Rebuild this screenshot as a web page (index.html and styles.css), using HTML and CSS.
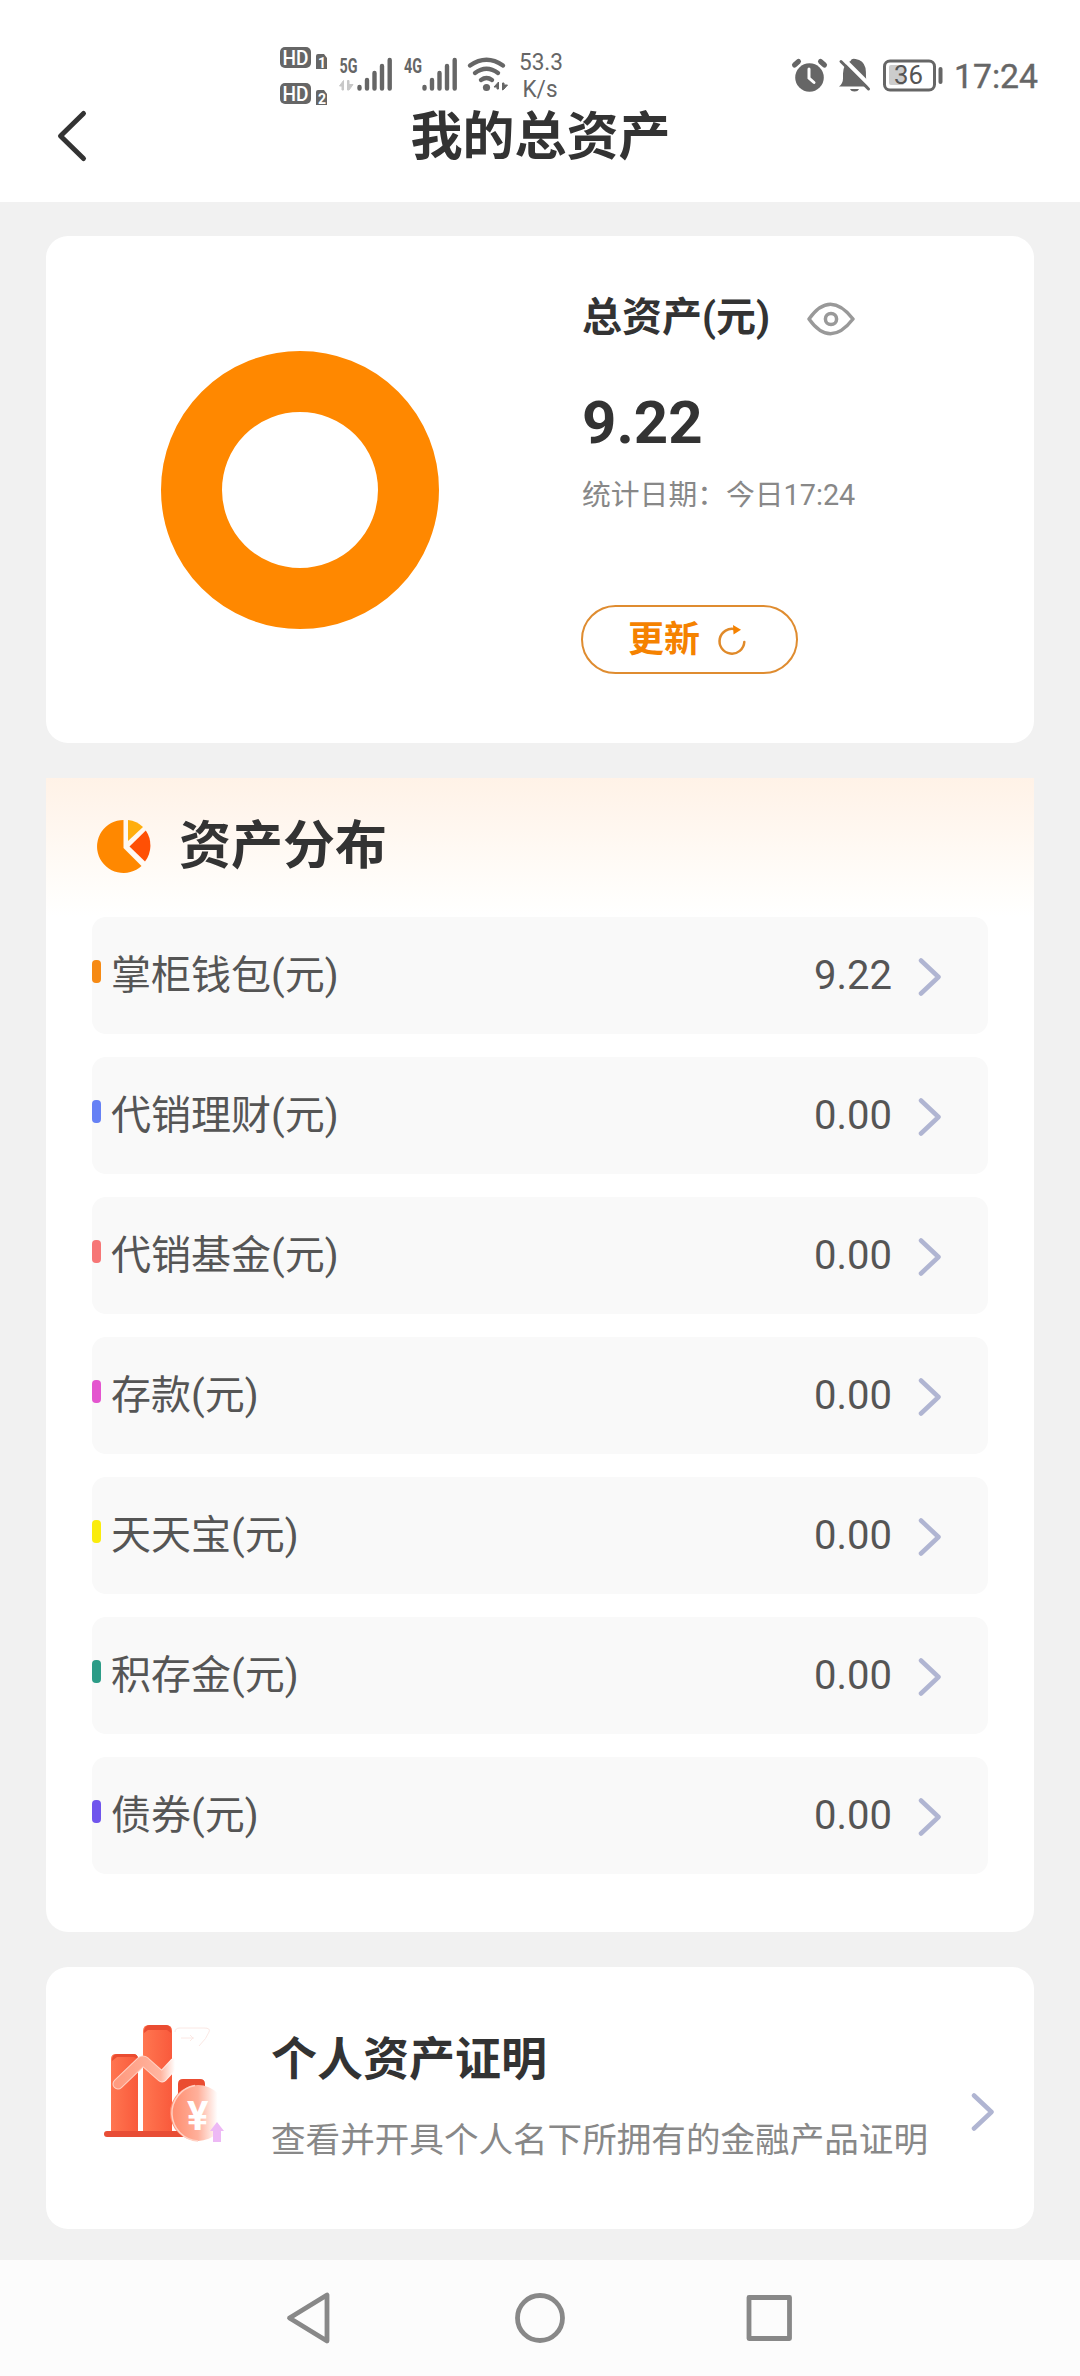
FILE: index.html
```html
<!DOCTYPE html>
<html lang="zh-CN">
<head>
<meta charset="utf-8">
<title>我的总资产</title>
<link rel="stylesheet" href="styles.css">
</head>
<body>
<svg class="defs" width="0" height="0">
  <symbol id="chevron" viewBox="0 0 24 40"><path d="M3 3.500 20.500 20 3 36.500" fill="none" stroke="#b0b5d2" stroke-width="4.500" stroke-linecap="round" stroke-linejoin="round"/></symbol>
</svg>
<header class="top">
  <div class="status">
    <svg class="status-left" width="300" height="80" viewBox="270 30 300 80">
      <g fill="#666">
        <rect x="280" y="47" width="31" height="21" rx="5"/>
        <rect x="280" y="83" width="31" height="21" rx="5"/>
        <path d="M318 54h6l3 4v11h-11V56q0-2 2-2zM318 90h6l3 4v11h-11V92q0-2 2-2z"/>
      </g>
      <g class="hd" fill="#fff">
        <text x="282.500" y="65" textLength="26" lengthAdjust="spacingAndGlyphs">HD</text>
        <text x="282.500" y="101" textLength="26" lengthAdjust="spacingAndGlyphs">HD</text>
        <text class="sim" x="318" y="67.500">1</text>
        <text class="sim" x="318" y="103.500">2</text>
      </g>
      <g class="net" fill="#666">
        <text x="339.500" y="73" textLength="18" lengthAdjust="spacingAndGlyphs">5G</text>
        <text x="404" y="73" textLength="18" lengthAdjust="spacingAndGlyphs">4G</text>
      </g>
      <path d="M339.500 86l4-5.500v9.500h-1.500v-4zM347.500 90v-9.500h1.500v4h4l-4 5.500z" fill="#c8c8c8" stroke="#c8c8c8"/>
      <g stroke="#666" stroke-width="4.400" stroke-linecap="round">
        <path d="M359.500 87v1.500M367 80v8.500M374.500 73v15.500M382 66v22.500M389.700 60v28.500"/>
        <path d="M424.500 87v1.500M432 80v8.500M439.500 73v15.500M447 66v22.500M454.700 60v28.500"/>
        <g fill="none"><path d="M470 65.500q16.500-11.500 33 0M475 73q11.500-8.500 23 0M481 80q5.500-4 11 0"/></g>
      </g>
      <circle cx="486.500" cy="87.500" r="3.600" fill="#666"/>
      <path d="M494 87l4.500-5v7h-1.500v-2zM502.500 90v-7h1.500v2h3.500l-3.500 4z" fill="#666" stroke="#666"/>
      <g class="speed" fill="#666">
        <text x="519" y="70" textLength="44" lengthAdjust="spacingAndGlyphs">53.3</text>
        <text x="522.500" y="97" textLength="35" lengthAdjust="spacingAndGlyphs">K/s</text>
      </g>
    </svg>
    <svg class="status-right" width="260" height="60" viewBox="785 45 260 60">
      <circle cx="809.500" cy="77.500" r="14.300" fill="#666"/>
      <path d="M794.500 65l4-3.500M824.500 65l-4-3.500" stroke="#666" stroke-width="5" stroke-linecap="round"/>
      <path d="M809 69v9l5 4.500" fill="none" stroke="#fff" stroke-width="3" stroke-linecap="round"/>
      <path d="M839 86.500q4-3 4-8v-5q0-9 7.500-12.500 1-3 5-2 8 1 10 9 .5 3 .5 9 0 6 3.500 9.500zM850 89h9q-1 2.500-4.500 2.500t-4.500-2.500z" fill="#666"/>
      <path d="M844 59.500 870.500 86" stroke="#fff" stroke-width="4"/>
      <path d="M841 61.500 868.500 89" stroke="#666" stroke-width="3" stroke-linecap="round"/>
      <rect x="884.500" y="61" width="50" height="29" rx="5.500" fill="none" stroke="#666" stroke-width="3"/>
      <rect x="889" y="65" width="15" height="20" rx="2" fill="#ccc"/>
      <path d="M940.500 69v13" stroke="#666" stroke-width="4" stroke-linecap="round"/>
      <text class="battery" x="894" y="84" textLength="29" lengthAdjust="spacingAndGlyphs">36</text>
      <text class="clock" x="954" y="88" textLength="84" lengthAdjust="spacingAndGlyphs">17:24</text>
    </svg>
  </div>
  <div class="titlebar">
    <svg class="back" width="40" height="60" viewBox="0 0 40 60"><path d="M31.500 7.500 8.500 30 31.500 52.500" fill="none" stroke="#333" stroke-width="5" stroke-linecap="round" stroke-linejoin="round"/></svg>
    <h1>我的总资产</h1>
  </div>
</header>

<main>
  <section class="card summary">
    <div class="chart"><div class="donut"></div></div>
    <div class="totals">
      <div class="label"><span>总资产(元)</span>
        <svg width="48" height="34" viewBox="0 0 48 34" fill="none" stroke="#999" stroke-width="3.500"><path d="M2 17Q23-12.500 46 17 23 46.500 2 17z" stroke-linejoin="round"/><circle cx="24" cy="17" r="5.600"/></svg>
      </div>
      <div class="amount">9.22</div>
      <div class="date">统计日期：今日17:24</div>
      <div class="update"><span>更新</span>
        <svg width="30" height="32" viewBox="0 0 30 32"><path d="M18.500 5.400A12.400 12.400 0 1 0 27.300 18" fill="none" stroke="#e08a2a" stroke-width="2.500" stroke-linecap="round"/><path d="M16 1l8 4.800-7.500 4.700z" fill="#f58200"/></svg>
      </div>
    </div>
  </section>

  <section class="card assets">
    <div class="heading">
      <svg width="56" height="56" viewBox="0 0 56 56"><path d="M26.500 1v28L44.500 47A26.500 26.500 0 1 1 26.500 1z" fill="#ff8800"/><path d="M31 1Q40 2 46 8L31 22z" fill="#ffae0d"/><path d="M48.800 11.500A26.500 26.500 0 0 1 48 42.500L32.500 27.500z" fill="#ff5005"/></svg>
      <h2>资产分布</h2>
    </div>
    <ul class="rows">
      <li><i class="orange"></i><span>掌柜钱包(元)</span><b>9.22</b><svg><use href="#chevron"/></svg></li>
      <li><i class="blue"></i><span>代销理财(元)</span><b>0.00</b><svg><use href="#chevron"/></svg></li>
      <li><i class="coral"></i><span>代销基金(元)</span><b>0.00</b><svg><use href="#chevron"/></svg></li>
      <li><i class="pink"></i><span>存款(元)</span><b>0.00</b><svg><use href="#chevron"/></svg></li>
      <li><i class="yellow"></i><span>天天宝(元)</span><b>0.00</b><svg><use href="#chevron"/></svg></li>
      <li><i class="teal"></i><span>积存金(元)</span><b>0.00</b><svg><use href="#chevron"/></svg></li>
      <li><i class="violet"></i><span>债券(元)</span><b>0.00</b><svg><use href="#chevron"/></svg></li>
    </ul>
  </section>

  <section class="card proof">
    <svg class="city" width="130" height="130" viewBox="0 0 130 130">
      <defs>
        <linearGradient id="tower" x2="1" y2="0"><stop stop-color="#ff7650"/><stop offset="1" stop-color="#f95a3c"/></linearGradient>
        <linearGradient id="trend" x2="1" y2="0"><stop stop-color="#ff9b80"/><stop offset=".75" stop-color="#ffb5a0"/><stop offset="1" stop-color="#fff"/></linearGradient>
        <linearGradient id="rim" x2="1" y2="0"><stop stop-color="#ffd0c2"/><stop offset=".7" stop-color="#ffd0c2"/><stop offset="1" stop-color="#fff"/></linearGradient>
        <linearGradient id="coin" x2="1" y2="0"><stop stop-color="#ff8a6b"/><stop offset=".5" stop-color="#ffb09b"/><stop offset=".85" stop-color="#fff"/></linearGradient>
      </defs>
      <path d="M7 111V38q0-5 5-5h17q5 0 5 5v73z" fill="url(#tower)"/>
      <path d="M39 111V10q0-6 6-6h17q6 0 6 6v101z" fill="url(#tower)"/>
      <path d="M8 40q0-7 5-7h16q5 0 5 5l-4-2H13zM40 12q0-8 6-8h16q5 0 5 8l-4-3H44zM74 76V63q0-5 5-5h17q5 0 5 5v13z" fill="#ea4c31"/>
      <rect y="110" width="81" height="6" rx="3" fill="#e84d35"/>
      <path d="M14 63 37 41q2-2 4 0l17 15 13-14" fill="none" stroke="url(#rim)" stroke-width="11" stroke-linecap="round" stroke-linejoin="round"/>
      <path d="M14 63 37 41q2-2 4 0l17 15 13-14" fill="none" stroke="url(#trend)" stroke-width="9" stroke-linecap="round" stroke-linejoin="round"/>
      <path d="M71 11q0-4 5-4h24q7 0 5 4-2 6-10 14M77 17h13M86 14l3 3-3 3" fill="none" stroke="#fbe8e4"/>
      <circle cx="94" cy="92" r="28" fill="url(#coin)"/>
      <path d="M91 64.500A28 28 0 0 0 94 120" fill="none" stroke="#ffd1c4" stroke-width="1.500"/>
      <text x="83" y="109">¥</text>
      <path d="M113 101l7 9h-3v11h-8v-11h-3z" fill="#edb9f5"/>
    </svg>
    <div class="proof-text">
      <h3>个人资产证明</h3>
      <p>查看并开具个人名下所拥有的金融产品证明</p>
    </div>
    <svg class="go"><use href="#chevron"/></svg>
  </section>
</main>

<nav>
  <svg width="56" height="60" viewBox="0 0 56 60"><path d="M44 7v46L6.500 30z"/></svg>
  <svg width="56" height="60" viewBox="0 0 56 60"><circle cx="28" cy="30" r="22.500"/></svg>
  <svg width="56" height="60" viewBox="0 0 56 60"><rect x="8" y="9.500" width="40.500" height="41"/></svg>
</nav>
</body>
</html>
```
FILE: styles.css
```css
* { box-sizing: border-box; }
body {
  margin: 0;
  width: 1080px;
  height: 2376px;
  display: flex;
  flex-direction: column;
  background: #f1f1f1;
  font-family: Roboto, "Noto Sans CJK SC", sans-serif;
  color: #333;
  overflow: hidden;
}
svg { display: block; flex: none; }
.defs { position: absolute; }
h1, h2, h3, p, ul { margin: 0; padding: 0; }

.top { height: 202px; background: #fff; flex: none; }
.status { height: 110px; display: flex; justify-content: space-between; padding: 30px 35px 0 270px; }
.status-right { margin-top: 15px; }
.hd { font-size: 21px; font-weight: 500; }
.sim { font-size: 14px; font-weight: 700; }
.net { font-size: 21px; font-weight: 700; }
.speed { font-size: 23px; }
.battery { font-size: 25px; fill: #555; }
.clock { font-size: 34px; fill: #666; stroke: #666; stroke-width: .4px; }
.titlebar { display: flex; align-items: center; height: 52px; padding-left: 52px; }
h1 { flex: 1; margin-right: 92px; padding: 4px 0 0 1px; text-align: center; font-size: 52px; line-height: 52px; font-weight: 700; }

main { padding: 34px 46px 0; flex: 1; display: flex; flex-direction: column; gap: 35px; }
.card { background: #fff; border-radius: 22px; flex: none; }
.summary { height: 507px; display: flex; }
.chart { width: 536px; padding: 115px 0 0 115px; }
.donut { width: 278px; height: 278px; border: 61px solid #ff8800; border-radius: 50%; }
.label { display: flex; align-items: center; gap: 37px; height: 60px; margin-top: 48px; font-size: 40px; font-weight: 700; }
.label svg { margin-top: 9px; }
.amount { height: 70px; margin-top: 44px; font-size: 60px; line-height: 70px; font-weight: 700; }
.date { height: 40px; margin-top: 17px; font-size: 28.800px; line-height: 40px; color: #888; }
.update { width: 217px; height: 69px; margin: 90px 0 0 -1px; border: 2px solid #df8c30; border-radius: 35px; display: flex; align-items: center; gap: 17px; padding-left: 45px; font-size: 36px; line-height: 60px; font-weight: 700; color: #f58200; }

.assets { height: 1154px; border-radius: 0 0 22px 22px; padding: 0 46px; background: linear-gradient(#fff2e7 0, #fffdfa 110px, #fff 139px); }
.heading { height: 139px; padding: 0 0 1px 5px; display: flex; align-items: center; gap: 26px; }
h2 { font-size: 52px; line-height: 60px; font-weight: 700; }
.rows { list-style: none; display: grid; gap: 23px; }
.rows li { width: 896px; height: 117px; background: #f9f9f9; border-radius: 14px; display: flex; align-items: center; font-size: 40px; line-height: 60px; color: #555; }
.rows i { width: 9px; height: 23px; border-radius: 4px; margin: 0 10px 8px 0; }
.rows span { flex: 1; }
.rows b { font-weight: 400; }
.rows svg { width: 24px; height: 40px; margin: 3px 46px 0 26px; }
.orange { background: #f68a14; }
.blue { background: #6681f5; }
.coral { background: #f67676; }
.pink { background: #e455cf; }
.yellow { background: #faec0c; }
.teal { background: #2c9c87; }
.violet { background: #7055ed; }

.proof { height: 262px; display: flex; padding-left: 58px; }
.city { margin-top: 54px; }
.city text { font: 700 40px Roboto, sans-serif; fill: #fff; }
.proof-text { width: 700px; margin: 59px 0 0 37px; }
h3 { font-size: 46px; line-height: 66px; font-weight: 700; }
p { margin-top: 21px; font-size: 34.600px; line-height: 54px; color: #888; white-space: nowrap; }
.go { width: 24px; height: 40px; margin: 125px 0 0 0; }

nav { height: 116px; background: #fcfcfc; display: flex; justify-content: space-between; align-items: center; padding: 0 283px; flex: none; }
nav svg { fill: none; stroke: #888; stroke-width: 4.800; stroke-linejoin: round; }
```
